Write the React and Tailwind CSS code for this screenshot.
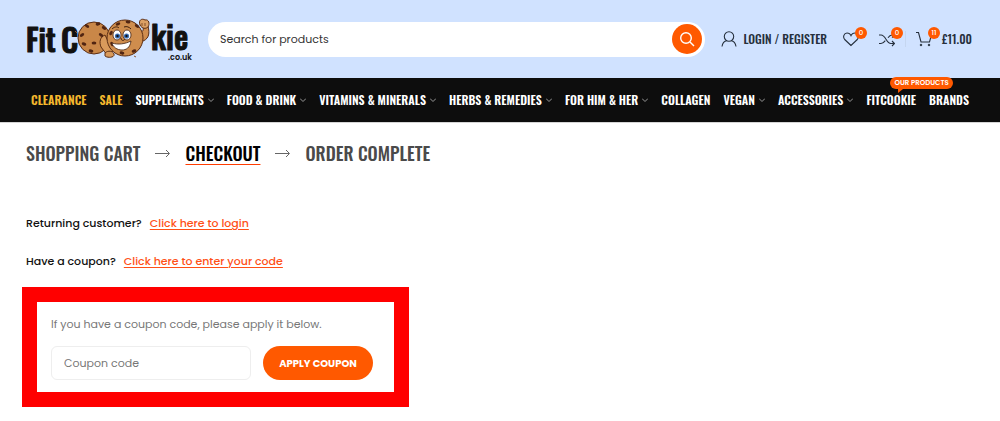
import React, { useState } from "react";

const NAV_ITEMS = [
  { label: "CLEARANCE", highlight: true },
  { label: "SALE", highlight: true },
  { label: "SUPPLEMENTS", menu: true },
  { label: "FOOD & DRINK", menu: true },
  { label: "VITAMINS & MINERALS", menu: true },
  { label: "HERBS & REMEDIES", menu: true },
  { label: "FOR HIM & HER", menu: true },
  { label: "COLLAGEN" },
  { label: "VEGAN", menu: true },
  { label: "ACCESSORIES", menu: true },
  { label: "FITCOOKIE", badge: "OUR PRODUCTS" },
  { label: "BRANDS" },
];

const CHIPS = [
  [87, 25, 30], [98, 23, -15], [104, 27, 30], [82, 34, -30], [84, 43, 20],
  [94, 42, 0], [101, 34, 30], [91, 50, 15], [118, 23, -25], [128, 21, 10],
  [137, 25, 30], [111, 32, -60], [112, 43, 60], [122, 52, 15], [134, 50, -20],
];

// Condensed face for headings and menus
const HEADING = "font-['Oswald','Liberation_Sans_Narrow',sans-serif]";

function Logo() {
  return (
    <svg viewBox="26 14 166 48" className="h-12 w-[166px] overflow-visible" role="img" aria-label="Fit Cookie">
      <g className="font-['Oswald','Liberation_Sans_Narrow',sans-serif] font-medium" fill="#111" stroke="#111" strokeLinejoin="round">
        <text x="26" y="51" fontSize="30" strokeWidth="1">Fit</text>
        <text x="61" y="52" fontSize="32" strokeWidth="1">C</text>
        <text x="151" y="49" fontSize="32" strokeWidth="1">kie</text>
      </g>
      <text x="168" y="59" fontSize="8" fill="#111" className="font-['Poppins',sans-serif] font-semibold">.co.uk</text>
      <g stroke="#5b2d13" strokeWidth="1">
        <circle cx="94" cy="37" r="16" fill="#c98748" />
        <path d="M105 34c-5 2-6 7-4 12l6 8 6-4-4-8z" fill="#d99a5b" />
        <path d="M105 52c3-3 8-2 9 1 1 4-7 4-9 2z" fill="#d99a5b" />
        <path d="M138 30c4 2 6 0 5-4l5-1c2 8 1 14-8 16z" fill="#d08d4e" />
        <path d="M140 24c-2-5 2-7 5-5 4-1 5 4 3 7-2 2-6 2-8-2z" fill="#dca064" />
        <circle cx="125" cy="37" r="18" fill="#cf8d4d" />
      </g>
      <g fill="#512512">
        {CHIPS.map(([x, y, turn]) => (
          <ellipse key={`${x}-${y}`} cx={x} cy={y} rx="2.4" ry="1.5" transform={`rotate(${turn} ${x} ${y})`} />
        ))}
      </g>
      <g stroke="#3d1d0c" strokeWidth="0.8">
        <ellipse cx="117" cy="34" rx="4" ry="5" fill="#fff" />
        <ellipse cx="127" cy="34" rx="4" ry="5" fill="#fff" />
        <path d="M112 42c6 2 13 1 19-2-1 7-5 9-9 9-5 0-9-3-10-7z" fill="#fff" />
        <path d="M112 28c2-2 5-3 7-1M124 26c3-1 5 0 7 2M121 37c0 3 3 3 4 1" fill="none" strokeWidth="1" />
      </g>
      <circle cx="117.5" cy="35" r="2.6" fill="#3a6fb7" />
      <circle cx="126.5" cy="35" r="2.6" fill="#3a6fb7" />
      <circle cx="117.5" cy="35" r="1.2" fill="#111" />
      <circle cx="126.5" cy="35" r="1.2" fill="#111" />
      <path d="M142 22v3M145 22v3" stroke="#5b2d13" strokeWidth="0.7" />
      <path d="M75 30l1 1M77 32l-1-1M134 55l2 1" stroke="#8d5730" />
    </svg>
  );
}

function Icon({ children, className }) {
  return (
    <svg viewBox="0 0 16 16" className={className} fill="none" stroke="currentColor" aria-hidden="true">
      {children}
    </svg>
  );
}

function IconLink({ label, count, children }) {
  return (
    <a href="#" aria-label={label} className="relative">
      <Icon className="size-4">{children}</Icon>
      <span className="absolute -top-1 left-3 flex size-3 items-center justify-center rounded-full bg-[#ff5900] font-['Poppins',sans-serif] text-[7px] font-medium text-white">
        {count}
      </span>
    </a>
  );
}

function Header() {
  return (
    <header className="flex h-[78px] items-center bg-[#d0e2ff] pr-7 pl-[26px] text-[#26303d]">
      <a href="#" className="shrink-0">
        <Logo />
      </a>
      <form className="ml-4 flex h-[35px] flex-1 items-center rounded-full bg-white pr-[3px] pl-3" onSubmit={(e) => e.preventDefault()}>
        <input
          type="search"
          aria-label="Search for products"
          placeholder="Search for products"
          className="min-w-0 flex-1 text-[11px] outline-none placeholder:text-[#333]"
        />
        <button aria-label="Search" className="flex size-[30px] items-center justify-center rounded-full bg-[#ff5900] text-white">
          <Icon className="size-4">
            <circle cx="7" cy="7" r="5.3" strokeWidth="1.4" />
            <path d="m11 11 4 4" strokeWidth="1.4" />
          </Icon>
        </button>
      </form>
      <div className={`ml-4 flex shrink-0 items-center text-[12px] font-medium ${HEADING}`}>
        <a href="#" className="flex items-center gap-1.5 whitespace-nowrap">
          <Icon className="size-4 shrink-0">
            <circle cx="8" cy="5.5" r="4.7" strokeWidth="1.1" />
            <path d="M1 15.500c.5-3.500 2.500-5.500 5-6M15 15.500c-.5-3.500-2.500-5.500-5-6" strokeWidth="1.1" />
          </Icon>
          LOGIN / REGISTER
        </a>
        <div className="ml-4 flex items-center gap-5">
          <IconLink label="Wishlist" count="0">
            <path d="M8 14.500 1.700 8.500C-.5 6 1 2 4 2c2 0 3.300 1 4 2.600C8.700 3 10 2 12 2c3 0 4.500 4 2.300 6.500z" strokeWidth="1.1" />
          </IconLink>
          <IconLink label="Compare" count="0">
            <path d="M0 4h2c5 0 5 8.500 10 8.500h3.500M0 12.500h2c2 0 3.200-1.300 4.300-2.800M9 6.800C10 5.300 11.200 4 13 4h2.500M13 1.500 15.500 4 13 6.500M13 10l2.500 2.500L13 15" strokeWidth="1.1" />
          </IconLink>
          <div className="-mx-2.5 h-4 w-px bg-[#c5d6f0]" />
          <IconLink label="Cart" count="11">
            <path d="M0 1.500h2.500L5 11h8.500L15 5.500" strokeWidth="1.1" />
            <circle cx="5" cy="14" r="0.8" fill="currentColor" />
            <circle cx="13" cy="14" r="0.8" fill="currentColor" />
          </IconLink>
        </div>
        <span className="ml-2.5">£11.00</span>
      </div>
    </header>
  );
}

function NavBar() {
  return (
    <nav className={`border-b border-[#d5d5d5] bg-[#0d0d0d] px-[31px] text-[12px] font-semibold text-white ${HEADING}`}>
      <ul className="flex h-11 items-center justify-between">
        {NAV_ITEMS.map((item) => (
          <li key={item.label} className="relative">
            <a href="#" className={`flex items-center gap-1 whitespace-nowrap ${item.highlight ? "text-[#f5b82e]" : ""}`}>
              {item.label}
              {item.menu && (
                <svg viewBox="0 0 6 4" className="h-1 w-1.5" fill="none" stroke="#999" aria-hidden="true">
                  <path d="m0 .5 3 3 3-3" />
                </svg>
              )}
            </a>
            {item.badge && (
              <span className="absolute -top-3.5 left-6 flex h-3 items-center rounded-full bg-[#ff5900] px-1 font-['Poppins',sans-serif] text-[7px] font-semibold whitespace-nowrap">
                {item.badge}
                <svg viewBox="0 0 5 4" className="absolute top-full left-2 h-1 w-[5px]" fill="#ff5900" aria-hidden="true">
                  <path d="M0 0h5L0 4z" />
                </svg>
              </span>
            )}
          </li>
        ))}
      </ul>
    </nav>
  );
}

function StepArrow() {
  return (
    <svg viewBox="0 0 15 10" className="h-2.5 w-[15px]" fill="none" stroke="#666" aria-hidden="true">
      <path d="M0 5.500h14M11 2l3.500 3.500L11 9" />
    </svg>
  );
}

function App() {
  const [coupon, setCoupon] = useState("");

  return (
    <div className="bg-white font-['Poppins',sans-serif] text-[#111]">
      <Header />
      <NavBar />
      <main className="px-[26px] pt-4">
        <ol className={`flex items-center gap-[15px] text-lg leading-7 font-medium text-[#4a4a4a] ${HEADING}`}>
          <li>SHOPPING CART</li>
          <StepArrow />
          <li className="text-black underline decoration-[#ff3c00] decoration-1 underline-offset-3">CHECKOUT</li>
          <StepArrow />
          <li>ORDER COMPLETE</li>
        </ol>
        <div className="mt-[46px] flex flex-col gap-[18px] text-[11px] leading-5 font-medium">
          <p>
            Returning customer?
            <a href="#" className="ml-2 text-[#ff5017] underline underline-offset-2">Click here to login</a>
          </p>
          <p>
            Have a coupon?
            <a href="#" className="ml-2 text-[#ff5017] underline underline-offset-2">Click here to enter your code</a>
          </p>
        </div>
        <form
          className="mt-4 -ml-1 w-full max-w-[387px] border-[15px] border-[#ff0000] px-3.5 pt-3 pb-3 text-[11px] text-[#777]"
          onSubmit={(e) => e.preventDefault()}
        >
          <label htmlFor="coupon" className="block leading-5">
            If you have a coupon code, please apply it below.
          </label>
          <div className="mt-3 flex gap-3">
            <input
              id="coupon"
              value={coupon}
              onChange={(e) => setCoupon(e.target.value)}
              placeholder="Coupon code"
              className="h-[34px] w-[200px] rounded-md border border-[#eee] px-3 placeholder:text-[#777]"
            />
            <button className="h-[34px] w-[110px] rounded-full bg-[#ff5900] text-[10px] font-bold text-white">
              APPLY COUPON
            </button>
          </div>
        </form>
      </main>
    </div>
  );
}

export default App;
